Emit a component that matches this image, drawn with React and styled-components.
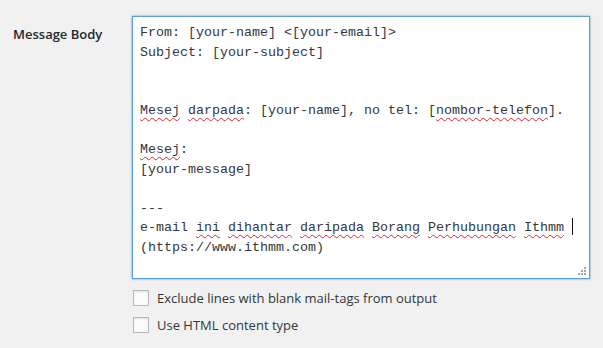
import styled, { createGlobalStyle } from "styled-components";

const GlobalStyle = createGlobalStyle`
  html, body {
    margin: 0;
    padding: 0;
    background: #f1f1f1;
  }
`;

const Row = styled.div`
  display: flex;
  align-items: flex-start;
  padding: 16px 0 0 0;
  font-family: "Open Sans", "Noto Sans", sans-serif;
  color: #23282d;
`;

const Label = styled.div`
  width: 132px;
  padding: 9px 0 0 13px;
  box-sizing: border-box;
  font-size: 13px;
  font-weight: 600;
  line-height: 18px;
  color: #23282d;
`;

const Field = styled.div`
  display: flex;
  flex-direction: column;
`;

const Editor = styled.div`
  position: relative;
  width: 458px;
  height: 263px;
  box-sizing: border-box;
  background: #fff;
  border: 1px solid #5b9dd9;
  box-shadow: 0 0 2px rgba(30, 140, 190, 0.8);
  padding: 6px 7px;
  font-family: "Liberation Mono", "DejaVu Sans Mono", monospace;
  font-size: 13.33px;
  line-height: 19.55px;
  color: #32373c;
  white-space: pre;
`;

const Misspelled = styled.span`
  text-decoration: underline wavy #e0252b;
  text-decoration-thickness: 1px;
  text-underline-offset: 3px;
`;

const Caret = styled.span`
  display: inline-block;
  width: 1px;
  height: 17px;
  background: #111;
  vertical-align: -4px;
`;

const Grip = styled.svg`
  position: absolute;
  right: 2px;
  bottom: 2px;
`;

const Option = styled.label`
  display: flex;
  align-items: center;
  gap: 8px;
  margin-top: ${(p) => p.$top}px;
  font-size: 13px;
  color: #32373c;
  line-height: 18px;
`;

const Box = styled.span`
  width: 16px;
  height: 16px;
  box-sizing: border-box;
  background: #fbfbfb;
  border: 1px solid #b4b9be;
  box-shadow: inset 0 1px 2px rgba(0, 0, 0, 0.1);
  margin-left: 1px;
`;

const M = ({ children }) => <Misspelled>{children}</Misspelled>;

export default function App() {
  return (
    <>
      <GlobalStyle />
      <Row>
        <Label>Message Body</Label>
        <Field>
          <Editor>
            {"From: [your-name] <[your-email]>\n"}
            {"Subject: [your-subject]\n"}
            {"\n\n"}
            <M>Mesej</M> <M>darpada</M>{": [your-name], no tel: ["}
            <M>nombor-telefon</M>
            {"].\n\n"}
            <M>Mesej</M>
            {":\n[your-message]\n\n---\ne-mail "}
            <M>ini</M> <M>dihantar</M> <M>daripada</M> <M>Borang</M>{" "}
            <M>Perhubungan</M> <M>Ithmm</M> <Caret />
            {"\n(https://www.ithmm.com)"}
            <Grip width="9" height="9" viewBox="0 0 9 9">
              <g fill="#a0a5aa">
                <rect x="6" y="0" width="2" height="2" />
                <rect x="3" y="3" width="2" height="2" />
                <rect x="6" y="3" width="2" height="2" />
                <rect x="0" y="6" width="2" height="2" />
                <rect x="3" y="6" width="2" height="2" />
                <rect x="6" y="6" width="2" height="2" />
              </g>
            </Grip>
          </Editor>
          <Option $top={10}>
            <Box />
            Exclude lines with blank mail-tags from output
          </Option>
          <Option $top={9}>
            <Box />
            Use HTML content type
          </Option>
        </Field>
      </Row>
    </>
  );
}
